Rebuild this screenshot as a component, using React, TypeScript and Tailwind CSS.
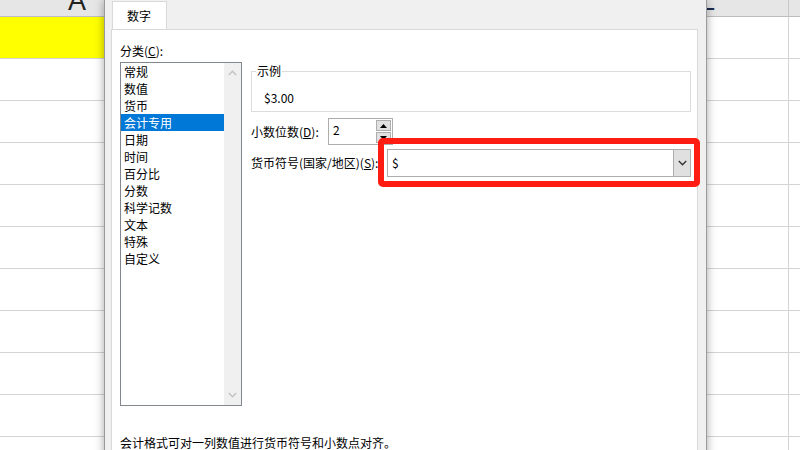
import React from "react";

const font = { fontFamily: '"Noto Sans CJK SC", "Noto Sans", sans-serif' };

function ChevronUp({ color = "#c2c2c2" }: { color?: string }) {
  return (
    <svg width="9" height="6" viewBox="0 0 9 6">
      <path d="M0.8 5 L4.5 1.3 L8.2 5" fill="none" stroke={color} strokeWidth="1.4" />
    </svg>
  );
}
function ChevronDown({ color = "#c2c2c2" }: { color?: string }) {
  return (
    <svg width="9" height="6" viewBox="0 0 9 6">
      <path d="M0.8 1 L4.5 4.7 L8.2 1" fill="none" stroke={color} strokeWidth="1.4" />
    </svg>
  );
}

const items = ["常规", "数值", "货币", "会计专用", "日期", "时间", "百分比", "分数", "科学记数", "文本", "特殊", "自定义"];

export default function App() {
  const rows = Array.from({ length: 10 });
  return (
    <div className="relative w-[800px] h-[450px] overflow-hidden bg-white text-[12px] text-black" style={font}>
      {/* spreadsheet background */}
      <div className="flex flex-col w-[800px]">
        <div className="flex h-[17px] bg-[#e6e6e6] border-b border-[#bdbdbd] overflow-hidden">
          <div className="w-[68px]" />
          <div className="text-[27px] leading-none mt-[-12px] text-[#222]" style={{ fontFamily: '"Liberation Sans", sans-serif' }}>A</div>
          <div className="w-[614px]" />
          <div className="text-[27px] leading-none mt-[-12px] text-[#1a2a4a]" style={{ fontFamily: '"Liberation Sans", sans-serif' }}>L</div>
          <div className="flex-1 border-r border-[#c8c8c8]" />
          <div className="w-[11px]" />
        </div>
        <div className="flex h-[42px] border-b border-[#d4d4d4]">
          <div className="w-[104px] bg-[#ffff00]" />
          <div className="flex-1" />
          <div className="w-[12px] border-l border-[#d4d4d4]" />
        </div>
        {rows.map((_, i) => (
          <div key={i} className="flex h-[42px] border-b border-[#d4d4d4]">
            <div className="flex-1" />
            <div className="w-[12px] border-l border-[#d4d4d4]" />
          </div>
        ))}
      </div>

      {/* dialog */}
      <div className="absolute left-[104px] top-0 w-[603px] h-[520px] bg-[#f0f0f0] border-l border-r border-[#9a9a9a] shadow-[0_0_9px_rgba(0,0,0,0.35)] flex flex-col pl-[6px] pr-[8px]">
        {/* tabs */}
        <div className="flex h-[29px] pt-[1px] pl-[1px]">
          <div className="w-[55px] h-[28px] bg-white border border-b-0 border-[#d9d9d9] flex items-center pl-[14px] relative z-10 mb-[-1px]">
            数字
          </div>
        </div>
        {/* panel */}
        <div className="flex-1 bg-white border border-[#d9d9d9] flex flex-col pl-[8px] pr-[6px] pt-[12px]">
          <div className="flex">
            {/* left column */}
            <div className="flex flex-col w-[122px]">
              <div className="h-[17px] leading-[17px]">
                分类(<span className="underline">C</span>):
              </div>
              <div className="mt-[3px] h-[344px] border border-[#828790] flex">
                <div className="flex-1 flex flex-col">
                  {items.map((it) => (
                    <div
                      key={it}
                      className={
                        "h-[17px] leading-[17px] pl-[3px] " +
                        (it === "会计专用" ? "bg-[#0078d7] text-white" : "")
                      }
                    >
                      {it}
                    </div>
                  ))}
                </div>
                <div className="w-[17px] bg-[#f0f0f0] flex flex-col items-center justify-between py-[7px]">
                  <ChevronUp />
                  <ChevronDown />
                </div>
              </div>
            </div>
            {/* right column */}
            <div className="flex flex-col flex-1 ml-[9px] pt-[21px]">
              <fieldset className="h-[49px] border border-[#dcdcdc]">
                <legend className="ml-[4px] px-[1px] leading-[16px]">示例</legend>
                <div className="mt-[11px] pl-[12px] leading-[16px]">$3.00</div>
              </fieldset>
              <div className="flex items-center mt-[6px] h-[27px]">
                <div className="w-[77px]">
                  小数位数(<span className="underline">D</span>):
                </div>
                <div className="w-[65px] h-[27px] border border-[#adadad] flex">
                  <div className="flex-1 pl-[4px] leading-[22px]">2</div>
                  <div className="w-[16px] flex flex-col py-[1px] pr-[1px] gap-[1px]">
                    <div className="flex-1 bg-[#e1e1e1] border border-[#adadad] flex items-center justify-center">
                      <svg width="7" height="4" viewBox="0 0 7 4"><path d="M0 4 L3.5 0 L7 4 Z" fill="#000" /></svg>
                    </div>
                    <div className="flex-1 bg-[#e1e1e1] border border-[#adadad] flex items-center justify-center">
                      <svg width="7" height="4" viewBox="0 0 7 4"><path d="M0 0 L3.5 4 L7 0 Z" fill="#000" /></svg>
                    </div>
                  </div>
                </div>
              </div>
              <div className="flex items-center mt-[4px] h-[28px]">
                <div className="w-[136px]">
                  货币符号(国家/地区)(<span className="underline">S</span>):
                </div>
                <div className="flex-1 h-[28px] border border-[#adadad] flex">
                  <div className="flex-1 pl-[4px] leading-[26px]">$</div>
                  <div className="w-[17px] bg-[#e0e0e0] border-l border-[#adadad] flex items-center justify-center">
                    <ChevronDown color="#333" />
                  </div>
                </div>
              </div>
            </div>
          </div>
          <div className="mt-[29px] leading-[16px]">会计格式可对一列数值进行货币符号和小数点对齐。</div>
        </div>
      </div>

      {/* red highlight */}
      <div className="absolute left-[378px] top-[138px] w-[322px] h-[49px] border-[6px] border-[#ff1c12] rounded-[5px]" />
    </div>
  );
}
